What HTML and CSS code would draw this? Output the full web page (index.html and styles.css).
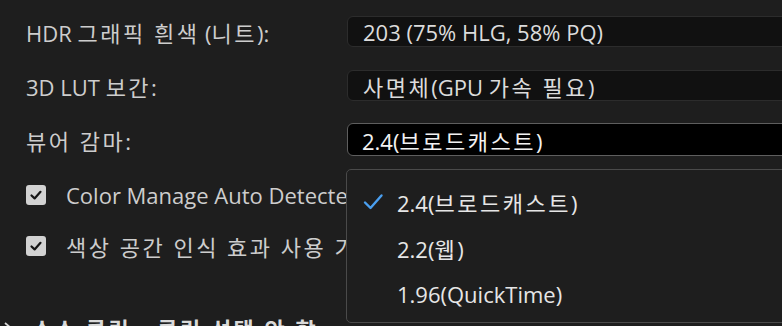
FILE: index.html
```html
<!DOCTYPE html>
<html lang="ko">
<head>
<meta charset="utf-8">
<link rel="stylesheet" href="styles.css">
</head>
<body>
<div class="panel">
  <div class="row">
    <div class="label">HDR <span class="k">그래픽 흰색</span> (<span class="k">니트</span>):</div>
    <div class="field"><span>203 (75% HLG, 58% PQ)</span></div>
  </div>
  <div class="row">
    <div class="label">3D LUT <span class="k">보간</span>:</div>
    <div class="field"><span><span class="k">사면체</span>(GPU <span class="k">가속 필요</span>)</span></div>
  </div>
  <div class="row">
    <div class="label"><span class="k">뷰어 감마</span>:</div>
    <div class="field focus"><span>2.4(<span class="k">브로드캐스트</span>)</span></div>
  </div>
  <div class="check-row">
    <span class="box"><svg viewBox="0 0 20 20" width="20" height="20"><path d="M5.5 10.5 L8.6 13.4 L14.5 6.8" fill="none" stroke="#151515" stroke-width="2.2" stroke-linecap="round" stroke-linejoin="round"/></svg></span>
    <span class="check-label">Color Manage Auto Detected Log Video</span>
  </div>
  <div class="check-row">
    <span class="box"><svg viewBox="0 0 20 20" width="20" height="20"><path d="M5.5 10.5 L8.6 13.4 L14.5 6.8" fill="none" stroke="#151515" stroke-width="2.2" stroke-linecap="round" stroke-linejoin="round"/></svg></span>
    <span class="check-label k">색상 공간 인식 효과 사용 기본값</span>
  </div>
  <div class="section">
    <svg class="chev" viewBox="0 0 12 16" width="12" height="16"><path d="M3 3 L9 8 L3 13" fill="none" stroke="#d8d8d8" stroke-width="1.8"/></svg>
    <span class="k">소스 클립 - 클립 선택 안 함</span>
  </div>
</div>
<div class="menu">
  <div class="item"><svg class="tick" viewBox="0 0 22 22" width="22" height="22"><path d="M3 11.5 L8.5 17 L19.5 4.5" fill="none" stroke="#4a9ff0" stroke-width="2.4" stroke-linecap="round" stroke-linejoin="round"/></svg><span>2.4(<span class="k">브로드캐스트</span>)</span></div>
  <div class="item"><span class="tick"></span><span>2.2(<span class="k">웹</span>)</span></div>
  <div class="item"><span class="tick"></span><span>1.96(QuickTime)</span></div>
</div>
</body>
</html>
```
FILE: styles.css
```css
html, body {
  margin: 0;
  padding: 0;
  background: #1e1e1e;
  width: 782px;
  height: 326px;
  overflow: hidden;
}
body {
  position: relative;
  font-family: "Open Sans", "Noto Sans CJK KR", sans-serif;
  font-size: 22px;
  color: #cdcdcd;
}
.k {
  letter-spacing: 2.5px;
}
.panel {
  padding: 15px 0 0 26px;
  display: flex;
  flex-direction: column;
}
.row {
  display: flex;
  align-items: center;
  height: 33px;
  margin-bottom: 21px;
}
.label {
  width: 321px;
  flex: none;
  white-space: nowrap;
}
.field {
  flex: none;
  width: 520px;
  height: 31px;
  box-sizing: border-box;
  border: 1px solid #2c2c2c;
  border-radius: 6px;
  background: #111111;
  color: #dcdcdc;
  padding-left: 15px;
  display: flex;
  align-items: center;
  white-space: nowrap;
}
.field.focus {
  height: 33px;
  background: #000;
  border-color: #5e5e5e;
  color: #f2f2f2;
  padding-left: 14px;
}
.check-row {
  display: flex;
  align-items: center;
  width: 320px;
  height: 30px;
  overflow: hidden;
  margin-bottom: 21px;
  white-space: nowrap;
}
.panel .row:nth-child(3) { margin-bottom: 24px; }
.box {
  width: 20px;
  height: 20px;
  flex: none;
  background: #d2d2d2;
  border-radius: 3px;
  display: block;
}
.box svg { display: block; }
.check-label {
  margin-left: 20px;
}
.section {
  display: flex;
  align-items: center;
  gap: 18px;
  margin-left: -26px;
  padding-left: 2px;
  margin-top: 30px;
  white-space: nowrap;
  font-weight: 600;
  color: #dadada;
}
.menu {
  position: absolute;
  left: 346px;
  top: 169px;
  width: 500px;
  height: 154px;
  box-sizing: border-box;
  border: 1px solid #4a4a4a;
  border-radius: 5px;
  background: #1e1e1e;
  padding-top: 9px;
  color: #e6e6e6;
}
.item {
  display: flex;
  align-items: center;
  height: 46px;
  padding-left: 15px;
  white-space: nowrap;
}
.tick {
  width: 22px;
  height: 22px;
  flex: none;
  margin-right: 13px;
  display: block;
}
```
